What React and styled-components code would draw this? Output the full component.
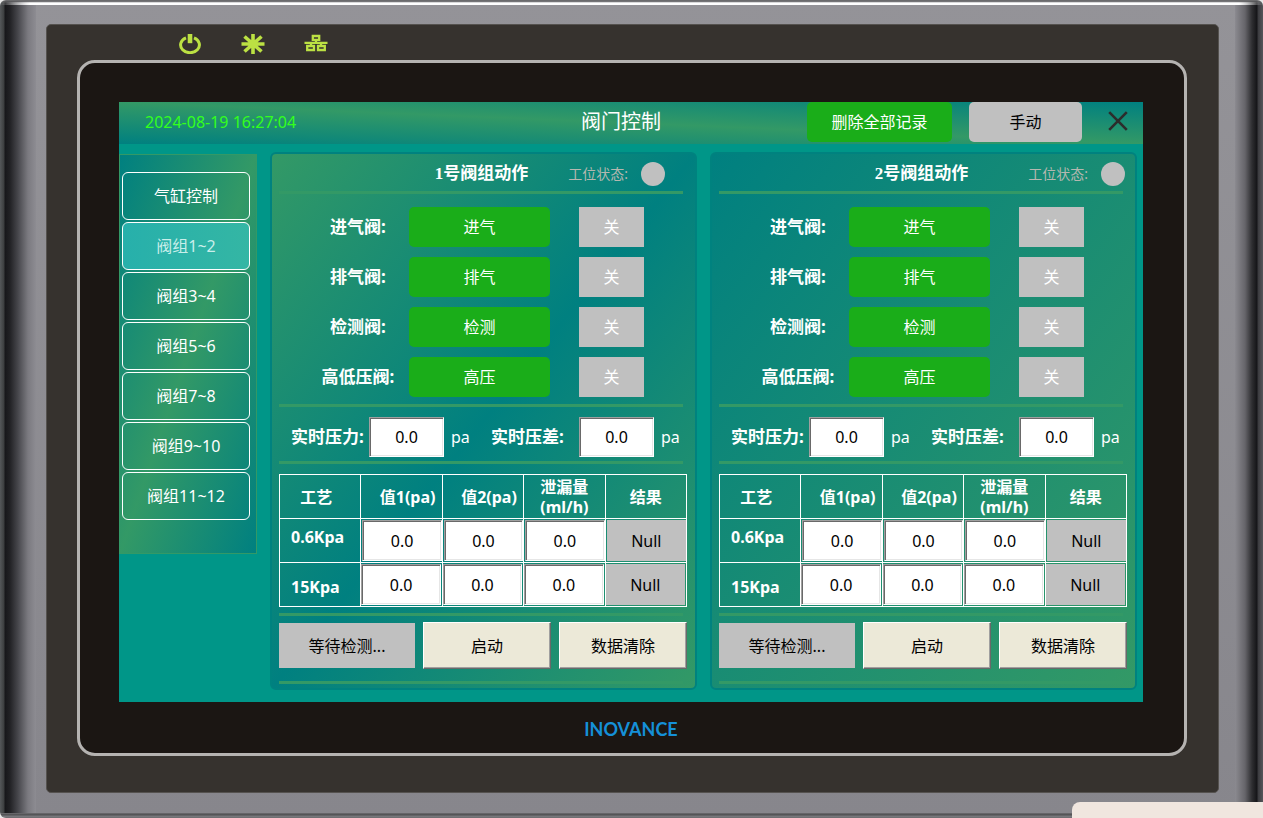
import React, { useState } from 'react';
import styled, { createGlobalStyle } from 'styled-components';

const GREEN = '#339966';
const TEAL = '#008080';

const pages = ['气缸控制', '阀组1~2', '阀组3~4', '阀组5~6', '阀组7~8', '阀组9~10', '阀组11~12'];

const valves = [
  { label: '进气阀:', action: '进气' },
  { label: '排气阀:', action: '排气' },
  { label: '检测阀:', action: '检测' },
  { label: '高低压阀:', action: '高压' },
];

const GlobalStyle = createGlobalStyle`
  * {
    box-sizing: border-box;
  }
  body {
    margin: 0;
    background: #e8e8e8;
    font-family: 'Noto Sans', 'Noto Sans CJK SC', sans-serif;
    font-size: 16px;
    line-height: 20px;
  }
  button, input {
    font: inherit;
    margin: 0;
  }
`;

function IndicatorIcons() {
  return (
    <Indicators>
      <svg viewBox="0 0 24 20" role="img" aria-label="power">
        <path d="M8 3.8A9.4 7.8 0 1 0 16 3.8" fill="none" stroke="#bce143" strokeWidth="3" />
        <path d="M12 0v9.2" stroke="#bce143" strokeWidth="4.6" />
      </svg>
      <svg viewBox="0 0 24 20" role="img" aria-label="run">
        <path d="M12 0v20M0.5 10h23M3.5 2.5l17 15M20.5 2.5l-17 15" stroke="#bce143" strokeWidth="3.6" />
      </svg>
      <svg viewBox="0 0 24 20" role="img" aria-label="network">
        <path
          d="M8.8 2h6.4v3.8H8.8zM12 5.8V9M0.5 8.8h23M7 9v3M17 9v3M3.2 12h6.8v4H3.2zM14 12h6.8v4H14z"
          fill="none"
          stroke="#bce143"
          strokeWidth="2.3"
        />
      </svg>
    </Indicators>
  );
}

function ValveGroup({ number, gradient, wideHead }) {
  return (
    <Panel $gradient={gradient}>
      <PanelHead $wide={wideHead}>
        <PanelTitle $wide={wideHead}>{number}号阀组动作</PanelTitle>
        <StatusLabel>工位状态:</StatusLabel>
        <Lamp />
      </PanelHead>
      <Line />
      <ValveList>
        {valves.map((valve) => (
          <ValveRow key={valve.action}>
            <BoldLabel>{valve.label}</BoldLabel>
            <GreenButton>{valve.action}</GreenButton>
            <StateBox>关</StateBox>
          </ValveRow>
        ))}
      </ValveList>
      <Line />
      <PressureRow>
        <BoldLabel as="label" htmlFor={`pressure-${number}`}>实时压力:</BoldLabel>
        <ValueInput id={`pressure-${number}`} defaultValue="0.0" />
        <Unit>pa</Unit>
        <BoldLabel as="label" htmlFor={`diff-${number}`}>实时压差:</BoldLabel>
        <ValueInput id={`diff-${number}`} defaultValue="0.0" />
        <Unit>pa</Unit>
      </PressureRow>
      <Line />
      <ResultTable>
        <thead>
          <tr>
            <HeadCell $shift="left">工艺</HeadCell>
            <HeadCell $shift="right">值1(pa)</HeadCell>
            <HeadCell $shift="right">值2(pa)</HeadCell>
            <HeadCell>泄漏量<br />(ml/h)</HeadCell>
            <HeadCell>结果</HeadCell>
          </tr>
        </thead>
        <tbody>
          {['0.6Kpa', '15Kpa'].map((step, i) => (
            <tr key={step}>
              <StepCell scope="row" $low={i === 1}>{step}</StepCell>
              {['值1', '值2', '泄漏量'].map((name) => (
                <Cell key={name} $first={i === 0}>
                  <ValueInput $table aria-label={`${step} ${name}`} defaultValue="0.0" />
                </Cell>
              ))}
              <Cell $first={i === 0}>
                <Result>Null</Result>
              </Cell>
            </tr>
          ))}
        </tbody>
      </ResultTable>
      <Line />
      <ActionRow>
        <WaitBox>等待检测...</WaitBox>
        <BevelButton>启动</BevelButton>
        <BevelButton>数据清除</BevelButton>
      </ActionRow>
      <Line />
    </Panel>
  );
}

function App() {
  const [page, setPage] = useState('阀组1~2');

  return (
    <Device>
      <GlobalStyle />
      <Bezel>
        <IndicatorIcons />
        <Glass>
          <Screen>
            <Header>
              <Clock>2024-08-19 16:27:04</Clock>
              <Title>阀门控制</Title>
              <HeaderActions>
                <HeaderButton $wide>删除全部记录</HeaderButton>
                <HeaderButton>手动</HeaderButton>
                <CloseButton aria-label="关闭">
                  <svg viewBox="0 0 20 20" width="20" height="20">
                    <path d="M1.2 1.2l17.6 17.6M18.8 1.2L1.2 18.8" stroke="#2c2c2c" strokeWidth="2.6" />
                  </svg>
                </CloseButton>
              </HeaderActions>
            </Header>
            <Body>
              <Sidebar>
                {pages.map((name) => (
                  <NavButton key={name} $active={name === page} onClick={() => setPage(name)}>
                    {name}
                  </NavButton>
                ))}
              </Sidebar>
              <ValveGroup number={1} gradient={`${GREEN}, ${TEAL}, ${GREEN}`} />
              <ValveGroup number={2} gradient={`${TEAL}, ${GREEN}`} wideHead />
            </Body>
          </Screen>
          <Brand>INOVANCE</Brand>
        </Glass>
      </Bezel>
      <CornerCard />
    </Device>
  );
}

const Device = styled.div`
  min-height: 100vh;
  padding: 24px 44px 25px 46px;
  display: flex;
  border-radius: 6px;
  background:
    linear-gradient(180deg, #6b6b6d 0, #6b6b6d 1px, transparent 3px) top / 100% 8px no-repeat,
    linear-gradient(90deg, transparent 0, #fff 30px, #fff calc(100% - 24px), transparent 100%) 0 2px / 100% 3px no-repeat,
    linear-gradient(0deg, #6b6b6d 0, #7c7c80 2px, #4c4c4e 3px, #6f6e72 5px) bottom / 100% 5px no-repeat,
    linear-gradient(90deg, #55585a 0, #3c3e3f 4px, #17171a 5px, #222225 10px, #47474c 18px, #7b7a80 28px, #8d8c92 36px, transparent 36px),
    linear-gradient(270deg, #55565a 0, #3a3a3e 5px, #141417 6px, #2e2e31 11px, #66656a 18px, #8b8a90 28px, transparent 28px),
    linear-gradient(180deg, #949398, #87868c);
`;

const Bezel = styled.div`
  flex: 1;
  display: flex;
  flex-direction: column;
  padding: 0 31px 36px 30px;
  border: 1px solid #55524f;
  border-radius: 5px;
  background: #36322e;
`;

const Indicators = styled.div`
  height: 35px;
  padding: 9px 0 0 101px;
  display: flex;
  gap: 39px;

  svg {
    width: 24px;
    height: 20px;
  }
`;

const Glass = styled.div`
  flex: 1;
  display: flex;
  flex-direction: column;
  padding: 39px 41px 0 39px;
  border: 3px solid #b5b3b1;
  border-radius: 18px;
  background: #1b1613;
`;

const Screen = styled.div`
  display: flex;
  flex-direction: column;
  background: #009688;
`;

const Header = styled.header`
  height: 42px;
  display: grid;
  grid-template-columns: 67fr 33fr auto;
  background: linear-gradient(to top right, ${TEAL}, ${GREEN}, ${TEAL});
`;

const Clock = styled.time`
  padding: 10px 0 0 26px;
  color: #33ff1c;
`;

const Title = styled.h1`
  margin: 0;
  padding: 10px 0 0 1px;
  color: white;
  font-size: 20px;
  font-weight: 400;
`;

const HeaderActions = styled.div`
  display: flex;
  align-items: flex-start;
  gap: 17px;
`;

const HeaderButton = styled.button`
  width: ${(props) => (props.$wide ? '145px' : '113px')};
  height: 40px;
  border: none;
  border-radius: 5px;
  color: ${(props) => (props.$wide ? 'white' : 'black')};
  background: ${(props) => (props.$wide ? '#1aad19' : '#c0c0c0')};
`;

const CloseButton = styled.button`
  width: 44px;
  height: 38px;
  padding: 0 0 0 9px;
  border: none;
  background: none;
  display: flex;
  align-items: center;
`;

const Body = styled.div`
  display: grid;
  grid-template-columns: 138px 1fr 1fr;
  align-items: start;
  gap: 13px;
  padding: 8px 6px 12px 0;
`;

const Sidebar = styled.nav`
  height: 400px;
  margin-top: 2px;
  padding: 17px 6px 0 2px;
  border: 1px solid ${GREEN};
  display: flex;
  flex-direction: column;
  gap: 2px;
  background: linear-gradient(to bottom right, ${TEAL}, ${GREEN}, ${TEAL});
`;

const NavButton = styled.button`
  height: 48px;
  border: 1px solid white;
  border-radius: 6px;
  color: ${(props) => (props.$active ? '#c9eeea' : 'white')};
  background: ${(props) => (props.$active ? 'linear-gradient(90deg, #27b0ab, #34b6a4)' : 'transparent')};
`;

const Panel = styled.section`
  padding: 0 8px 4px 7px;
  border: 2px solid #00827f;
  border-radius: 6px;
  background: linear-gradient(to bottom right, ${(props) => props.$gradient});
`;

const PanelHead = styled.div`
  height: 37px;
  padding: 2px ${(props) => (props.$wide ? '2px' : '22px')} 0 0;
  display: flex;
  align-items: center;
  justify-content: flex-end;
`;

const PanelTitle = styled.h2`
  margin: 0 ${(props) => (props.$wide ? '60px' : '40px')} 0 0;
  color: white;
  font-family: 'Liberation Serif', 'Noto Sans CJK SC', serif;
  font-size: 17px;
  font-weight: 700;
`;

const StatusLabel = styled.span`
  margin-right: 13px;
  color: #b4b8b0;
  font-size: 14px;
`;

const Lamp = styled.span`
  width: 24px;
  height: 24px;
  border-radius: 50%;
  background: #c0c0c0;
`;

const Line = styled.hr`
  height: 3px;
  margin: 0 4px 0 0;
  border: none;
  background: ${GREEN};
`;

const ValveList = styled.div`
  padding: 13px 43px 7px 28px;
  display: grid;
  gap: 10px;
`;

const ValveRow = styled.div`
  display: grid;
  grid-template-columns: 1fr 141px 65px;
  column-gap: 29px;
  align-items: center;

  span {
    margin-right: -29px;
    text-align: center;
  }
`;

const BoldLabel = styled.span`
  color: white;
  font-size: 17px;
  font-weight: 700;
  white-space: nowrap;
`;

const GreenButton = styled.button`
  height: 40px;
  border: none;
  border-radius: 5px;
  color: white;
  background: #1aad19;
`;

const StateBox = styled.div`
  height: 40px;
  display: flex;
  align-items: center;
  justify-content: center;
  color: white;
  background: #c0c0c0;
`;

const PressureRow = styled.div`
  height: 54px;
  padding: 6px 0 0 12px;
  display: grid;
  grid-template-columns: 78px 75px 47px 88px 75px 1fr;
  align-items: center;
`;

const ValueInput = styled.input`
  display: block;
  width: 100%;
  min-width: 0;
  height: ${(props) => (props.$table ? '41px' : '40px')};
  padding: 0;
  border: 1px solid;
  border-color: #a0a0a0 white white #a0a0a0;
  box-shadow: inset 1px 1px #696969, inset -1px -1px #e6e6e6;
  text-align: center;
  color: black;
  background: white;
`;

const Unit = styled.span`
  padding-left: 7px;
  color: white;
`;

const ResultTable = styled.table`
  width: 100%;
  margin: 10px 0 6px;
  border-collapse: collapse;
  table-layout: fixed;
  color: white;

  th, td {
    height: 44px;
    border: 1px solid white;
  }
`;

const HeadCell = styled.th`
  padding: ${(props) => ({ left: '0 8px 0 0', right: '0 0 0 12px' })[props.$shift] || 0};
  white-space: nowrap;
`;

const StepCell = styled.th`
  padding: ${(props) => (props.$low ? '5px 0 0 11px' : '0 0 8px 11px')};
  text-align: left;
`;

const Cell = styled.td`
  padding: ${(props) => (props.$first ? '1px 0 1px 1px' : '1px 1px 1px 0')};
`;

const Result = styled.div`
  height: 41px;
  display: flex;
  align-items: center;
  justify-content: center;
  color: black;
  background: #c0c0c0;
`;

const ActionRow = styled.div`
  padding: 6px 0 12px;
  display: grid;
  grid-template-columns: 136fr 128fr 128fr;
  gap: 8px;
  align-items: center;
`;

const WaitBox = styled.div`
  height: 45px;
  display: flex;
  align-items: center;
  justify-content: center;
  color: black;
  background: #c0c0c0;
`;

const BevelButton = styled.button`
  height: 47px;
  border: 1px solid;
  border-color: white #696969 #696969 white;
  box-shadow: inset -1px -1px #a0a0a0;
  color: black;
  background: #ece9d8;
`;

const Brand = styled.div`
  padding-top: 17px;
  text-align: center;
  color: #1590d8;
  font-family: Lato, sans-serif;
  font-size: 18px;
  font-weight: 700;
`;

const CornerCard = styled.div`
  position: absolute;
  right: 0;
  bottom: 0;
  width: 191px;
  height: 16px;
  border-top-left-radius: 8px;
  background: #f0e6df;
`;

export default App;
